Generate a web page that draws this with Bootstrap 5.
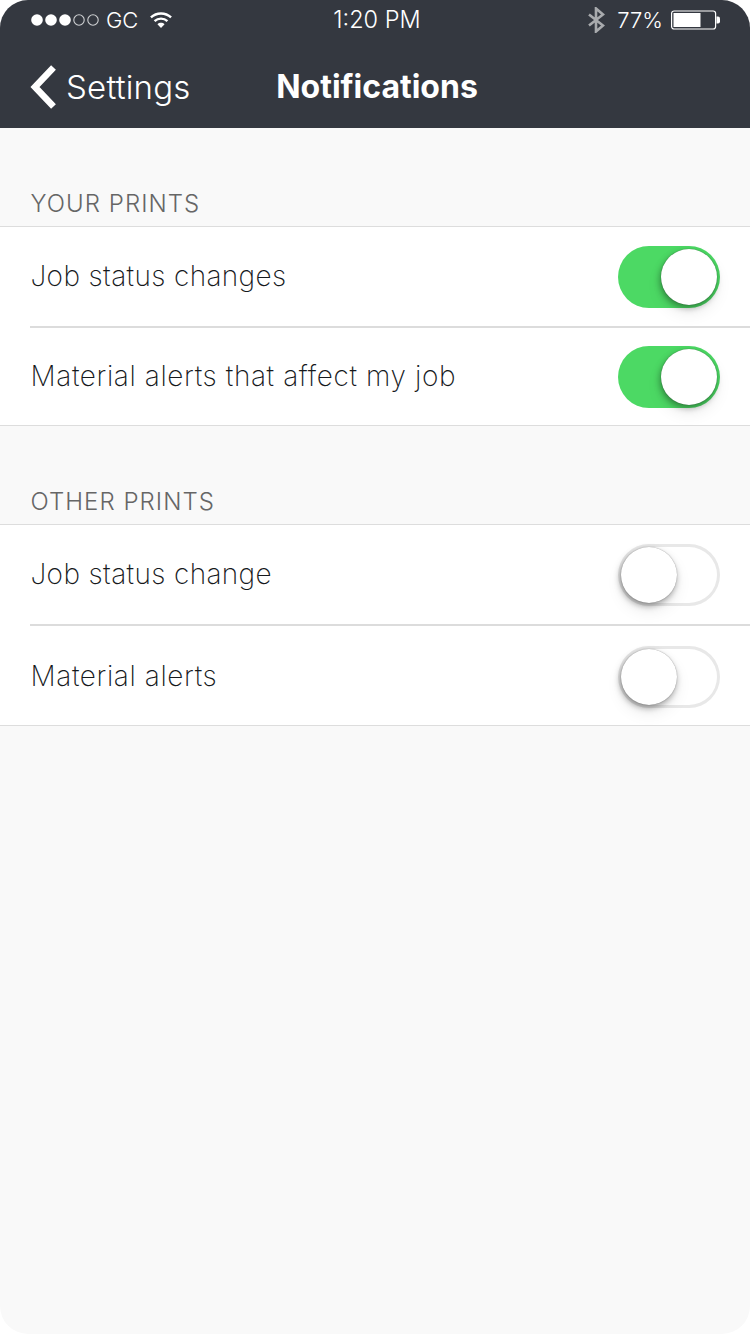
<!DOCTYPE html>
<html lang="en">
<head>
<meta charset="utf-8">
<title>Notifications</title>
<link href="https://cdn.jsdelivr.net/npm/bootstrap@5.3.0/dist/css/bootstrap.min.css" rel="stylesheet">
<style>
html,body{height:100%}
body{background:#fff;font-family:"Inter","Liberation Sans",sans-serif;font-weight:300;color:#16191c}
.phone{width:750px;height:1334px;background:#f9f9f9;border-radius:28px;overflow:hidden}
.topbar{height:128px;background:#343840;color:#fff}
.statusline{height:40px;padding:0 30px 0 31px;font-size:22px;line-height:40px}
.status-side{width:260px}
.statusclock{font-size:23.5px;margin-left:3px}
.carrier{margin-left:7px}
.wifiglyph{margin-left:12px}
.btglyph{margin-right:12px}
.titleline{height:88px;padding:6px 26px 0 30px;display:grid;grid-template-columns:1fr auto 1fr;align-items:center}
.backlink{font-size:33px;line-height:40px;gap:10px;color:#fff;text-decoration:none;letter-spacing:.2px}
.screen-title{font-size:32px;font-weight:700;line-height:40px;color:#fff;margin:0}
.grouplabel{height:39px;padding:0 0 6px 30.5px;font-size:24px;line-height:33px;color:#666;letter-spacing:1.05px;margin:59px 0 0}
.grouplist{background:#fff;border-top:1px solid #ddd;border-bottom:1px solid #ddd}
.setrow{height:99px;padding:0 30px 0 30.5px;font-size:28px;font-weight:250;letter-spacing:.36px;margin:0}
.setrow-b{height:97px;padding-top:1px}
.setrow-c{padding-top:1px}
.setrow-d{height:99.5px;padding-top:3.5px}
.rowtext{margin-top:-2px}
.rowtext-wide{letter-spacing:.6px}
.rule{height:2px;margin-left:30px;background:#dcdcdc}
.rule-thin{height:1.5px}
.toggletrack{width:102px;height:62px;border-radius:31px;padding:3px;flex:none}
.toggletrack.on{background:#4cd964;justify-content:flex-end}
.toggletrack.off{background:#fff;box-shadow:inset 0 0 0 3px #e8e8e8;justify-content:flex-start}
.toggleknob{width:56px;height:56px;border-radius:50%;background:#fff;box-shadow:0 0 1px rgba(0,0,0,.45),-1px 3px 6px rgba(0,0,0,.35),0 8px 16px rgba(0,0,0,.08)}
</style>
</head>
<body class="m-0">
<div class="phone d-flex flex-column">
  <header class="topbar">
    <div class="statusline d-flex justify-content-between align-items-center">
      <div class="status-side d-flex align-items-center">
        <svg width="68" height="14" viewBox="0 0 68 14" fill="none" aria-hidden="true"><circle cx="6" cy="7" r="5.8" fill="#fff"/><circle cx="20" cy="7" r="5.8" fill="#fff"/><circle cx="34" cy="7" r="5.8" fill="#fff"/><circle cx="48" cy="7" r="5.2" stroke="#cfd1d3" stroke-width="1.1"/><circle cx="62" cy="7" r="5.2" stroke="#cfd1d3" stroke-width="1.1"/></svg>
        <span class="carrier">GC</span>
        <svg class="wifiglyph" width="22" height="18" viewBox="0 0 24 18" fill="none" stroke="#fff" stroke-width="2.6" aria-hidden="true"><path d="M1 6.2C7.2.4 16.8.4 23 6.2"/><path d="M5 10.2c3.9-3.6 10.1-3.6 14 0"/><path d="M12 17.6l-3.9-4.1c2.2-2 5.6-2 7.8 0z" fill="#fff" stroke="none"/></svg>
      </div>
      <div class="statusclock">1:20 PM</div>
      <div class="status-side d-flex align-items-center justify-content-end">
        <svg class="btglyph" width="18" height="26" viewBox="0 0 18 26" fill="none" stroke="#a8aaad" stroke-width="2.6" aria-hidden="true"><path d="M2 7.5l14 11L9 24.5V1.5l7 6L2 18.5"/></svg>
        <span>77%</span>
        <svg class="ms-2" width="49" height="20" viewBox="0 0 49 20" fill="none" aria-hidden="true"><rect x=".6" y="1" width="44" height="18" rx="2.5" stroke="#fff" stroke-width="1.2"/><rect x="2.5" y="3" width="27" height="14" fill="#fff"/><path d="M45.5 6.5h1.5a2 2 0 0 1 2 2v3a2 2 0 0 1-2 2h-1.5z" fill="#fff"/></svg>
      </div>
    </div>
    <div class="titleline">
      <a class="backlink d-inline-flex align-items-center" href="#">
        <svg width="26" height="44" viewBox="0 0 26 44" fill="none" stroke="#fff" stroke-width="6.6" aria-hidden="true"><path d="M23.5 2.5L5 22l18.5 19.5"/></svg>
        <span>Settings</span>
      </a>
      <h1 class="screen-title">Notifications</h1>
      <div></div>
    </div>
  </header>
  <main>
    <h2 class="grouplabel fw-light">YOUR PRINTS</h2>
    <div class="grouplist">
      <div class="setrow d-flex justify-content-between align-items-center"><span class="rowtext">Job status changes</span><div class="toggletrack on d-flex" role="switch" aria-checked="true"><div class="toggleknob"></div></div></div>
      <div class="rule"></div>
      <div class="setrow setrow-b d-flex justify-content-between align-items-center"><span class="rowtext rowtext-wide">Material alerts that affect my job</span><div class="toggletrack on d-flex" role="switch" aria-checked="true"><div class="toggleknob"></div></div></div>
    </div>
    <h2 class="grouplabel fw-light">OTHER PRINTS</h2>
    <div class="grouplist">
      <div class="setrow setrow-c d-flex justify-content-between align-items-center"><span class="rowtext">Job status change</span><div class="toggletrack off d-flex" role="switch" aria-checked="false"><div class="toggleknob"></div></div></div>
      <div class="rule rule-thin"></div>
      <div class="setrow setrow-d d-flex justify-content-between align-items-center"><span class="rowtext rowtext-wide">Material alerts</span><div class="toggletrack off d-flex" role="switch" aria-checked="false"><div class="toggleknob"></div></div></div>
    </div>
  </main>
</div>
<script src="https://cdn.jsdelivr.net/npm/bootstrap@5.3.0/dist/js/bootstrap.bundle.min.js"></script>
</body>
</html>
